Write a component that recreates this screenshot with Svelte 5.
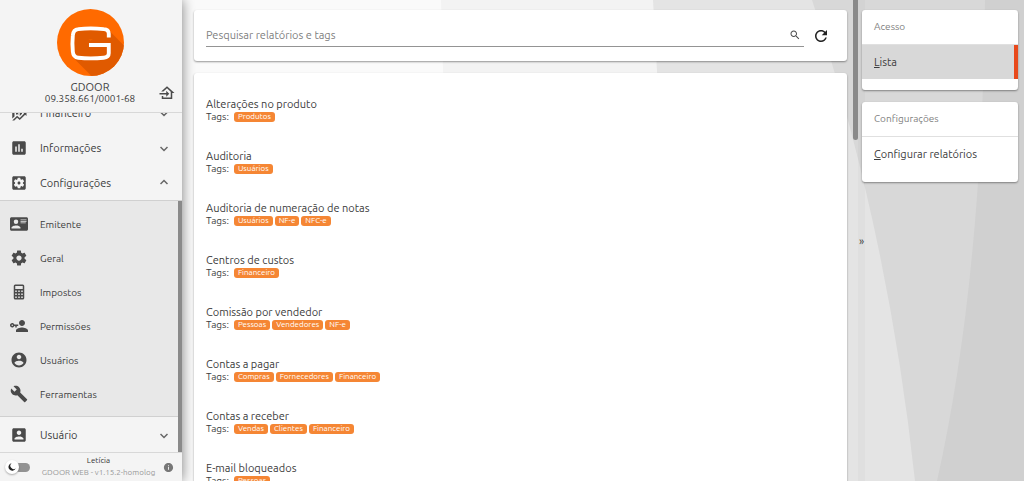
<script>
  const icons = {
    finance: 'M6,16.5L3,19.44V11H6M11,14.66L9.43,13.32L8,14.64V7H11M16,13L13,16V3H16M18.81,12.81L17,11H22V16L20.21,14.21L13,21.36L9.53,18.34L5.75,22H3L9.47,15.66L13,18.64',
    chart: 'M19 3H5c-1.1 0-2 .9-2 2v14c0 1.1.9 2 2 2h14c1.1 0 2-.9 2-2V5c0-1.1-.9-2-2-2zM9 17H7v-7h2v7zm4 0h-2V7h2v10zm4 0h-2v-4h2v4z',
    settingsBox: 'M12 10c-1.1 0-2 .9-2 2s.9 2 2 2 2-.9 2-2-.9-2-2-2zm7-7H5c-1.11 0-2 .9-2 2v14c0 1.1.89 2 2 2h14c1.11 0 2-.9 2-2V5c0-1.1-.89-2-2-2zm-1.75 9c0 .23-.02.46-.05.68l1.48 1.16c.13.11.17.3.08.45l-1.4 2.42c-.09.15-.27.21-.43.15l-1.74-.7c-.36.28-.76.51-1.18.69l-.26 1.85c-.03.17-.18.3-.35.3h-2.8c-.17 0-.32-.13-.35-.29l-.26-1.85c-.43-.18-.82-.41-1.18-.69l-1.74.7c-.16.06-.34 0-.43-.15l-1.4-2.42c-.09-.15-.05-.34.08-.45l1.48-1.16c-.03-.23-.05-.46-.05-.69 0-.23.02-.46.05-.68l-1.48-1.16c-.13-.11-.17-.3-.08-.45l1.4-2.42c.09-.15.27-.21.43-.15l1.74.7c.36-.28.76-.51 1.18-.69l.26-1.85c.03-.17.18-.3.35-.3h2.8c.17 0 .32.13.35.29l.26 1.85c.43.18.82.41 1.18.69l1.74-.7c.16-.06.34 0 .43.15l1.4 2.42c.09.15.05.34-.08.45l-1.48 1.16c.03.23.05.46.05.69z',
    card: 'M2,3H22C23.05,3 24,3.95 24,5V19C24,20.05 23.05,21 22,21H2C0.95,21 0,20.05 0,19V5C0,3.95 0.95,3 2,3M14,6V7H22V6H14M14,8V9H21.5L22,9V8H14M14,10V11H21V10H14M8,13.91C6,13.91 2,15 2,17V18H14V17C14,15 10,13.91 8,13.91M8,6A3,3 0 0,0 5,9A3,3 0 0,0 8,12A3,3 0 0,0 11,9A3,3 0 0,0 8,6Z',
    gear: 'M19.43 12.98c.04-.32.07-.64.07-.98s-.03-.66-.07-.98l2.11-1.65c.19-.15.24-.42.12-.64l-2-3.46c-.12-.22-.39-.3-.61-.22l-2.49 1c-.52-.4-1.08-.73-1.69-.98l-.38-2.65C14.46 2.18 14.25 2 14 2h-4c-.25 0-.46.18-.49.42l-.38 2.65c-.61.25-1.17.59-1.69.98l-2.49-1c-.23-.09-.49 0-.61.22l-2 3.46c-.13.22-.07.49.12.64l2.11 1.65c-.04.32-.07.65-.07.98s.03.66.07.98l-2.11 1.65c-.19.15-.24.42-.12.64l2 3.46c.12.22.39.3.61.22l2.49-1c.52.4 1.08.73 1.69.98l.38 2.65c.03.24.24.42.49.42h4c.25 0 .46-.18.49-.42l.38-2.65c.61-.25 1.17-.59 1.69-.98l2.49 1c.23.09.49 0 .61-.22l2-3.46c.12-.22.07-.49-.12-.64l-2.11-1.65zM12 15.5c-1.93 0-3.5-1.57-3.5-3.5s1.57-3.5 3.5-3.5 3.5 1.57 3.5 3.5-1.57 3.5-3.5 3.5z',
    calculator: 'M7,2H17A2,2 0 0,1 19,4V20A2,2 0 0,1 17,22H7A2,2 0 0,1 5,20V4A2,2 0 0,1 7,2M7,4V8H17V4H7M7,10V12H9V10H7M11,10V12H13V10H11M15,10V12H17V10H15M7,14V16H9V14H7M11,14V16H13V14H11M15,14V16H17V14H15M7,18V20H9V18H7M11,18V20H13V18H11M15,18V20H17V18H15Z',
    key: 'M11 10v2H9v2H7v-2H5.8c-.4 1.2-1.5 2-2.8 2-1.7 0-3-1.3-3-3s1.3-3 3-3c1.3 0 2.4.8 2.8 2H11m-8 0c-.6 0-1 .4-1 1s.4 1 1 1 1-.4 1-1-.4-1-1-1m13 4c2.7 0 8 1.3 8 4v2H8v-2c0-2.7 5.3-4 8-4m0-2c-2.2 0-4-1.8-4-4s1.8-4 4-4 4 1.8 4 4-1.8 4-4 4Z',
    account: 'M12 2C6.48 2 2 6.48 2 12s4.48 10 10 10 10-4.48 10-10S17.52 2 12 2zm0 3c1.66 0 3 1.34 3 3s-1.34 3-3 3-3-1.34-3-3 1.34-3 3-3zm0 14.2c-2.5 0-4.71-1.28-6-3.22.03-1.99 4-3.08 6-3.08 1.99 0 5.97 1.09 6 3.08-1.29 1.94-3.5 3.22-6 3.22z',
    wrench: 'M22.7 19l-9.1-9.1c.9-2.3.4-5-1.5-6.9-2-2-5-2.4-7.4-1.3L9 6 6 9 1.6 4.7C.4 7.1.9 10.1 2.9 12.1c1.9 1.9 4.6 2.4 6.9 1.5l9.1 9.1c.4.4 1 .4 1.4 0l2.3-2.3c.5-.4.5-1.1.1-1.4z',
    accountBox: 'M3 5v14c0 1.1.89 2 2 2h14c1.1 0 2-.9 2-2V5c0-1.1-.9-2-2-2H5c-1.11 0-2 .9-2 2zm12 4c0 1.66-1.34 3-3 3s-3-1.34-3-3 1.34-3 3-3 3 1.34 3 3zm-9 8c0-2 4-3.1 6-3.1s6 1.1 6 3.1v1H6v-1z',
    exit: 'M15 13L11 17V14H2V12H11V9L15 13M5 20V16H7V18H17V10.19L12 5.69L7.21 10H4.22L12 3L22 12H19V20H5Z',
    search: 'M15.5 14h-.79l-.28-.27C15.41 12.59 16 11.11 16 9.5 16 5.91 13.09 3 9.5 3S3 5.91 3 9.5 5.91 16 9.5 16c1.61 0 3.09-.59 4.23-1.57l.27.28v.79l5 4.99L20.49 19l-4.99-5zm-6 0C7.01 14 5 11.99 5 9.5S7.01 5 9.5 5 14 7.01 14 9.5 11.99 14 9.5 14z',
    refresh: 'M17.65 6.35C16.2 4.9 14.21 4 12 4c-4.42 0-7.99 3.58-7.99 8s3.57 8 7.99 8c3.73 0 6.84-2.55 7.73-6h-2.08c-.82 2.33-3.04 4-5.65 4-3.31 0-6-2.69-6-6s2.69-6 6-6c1.66 0 3.14.69 4.22 1.78L13 11h7V4l-2.35 2.35z',
    info: 'M12 2C6.48 2 2 6.48 2 12s4.48 10 10 10 10-4.48 10-10S17.52 2 12 2zm1 15h-2v-6h2v6zm0-8h-2V7h2v2z'
  };

  const menu = [
    { label: 'Financeiro', icon: 'finance' },
    { label: 'Informações', icon: 'chart' },
    {
      label: 'Configurações',
      icon: 'settingsBox',
      children: [
        { label: 'Emitente', icon: 'card' },
        { label: 'Geral', icon: 'gear' },
        { label: 'Impostos', icon: 'calculator' },
        { label: 'Permissões', icon: 'key' },
        { label: 'Usuários', icon: 'account' },
        { label: 'Ferramentas', icon: 'wrench' }
      ]
    },
    { label: 'Usuário', icon: 'accountBox' }
  ];

  const reports = [
    { title: 'Alterações no produto', tags: ['Produtos'] },
    { title: 'Auditoria', tags: ['Usuários'] },
    { title: 'Auditoria de numeração de notas', tags: ['Usuários', 'NF-e', 'NFC-e'] },
    { title: 'Centros de custos', tags: ['Financeiro'] },
    { title: 'Comissão por vendedor', tags: ['Pessoas', 'Vendedores', 'NF-e'] },
    { title: 'Contas a pagar', tags: ['Compras', 'Fornecedores', 'Financeiro'] },
    { title: 'Contas a receber', tags: ['Vendas', 'Clientes', 'Financeiro'] },
    { title: 'E-mail bloqueados', tags: ['Pessoas'] }
  ];

  let open = $state('Configurações');
  let search = $state('');
  let light = $state(false);

  const filtered = $derived(
    reports.filter((r) => (r.title + ' ' + r.tags.join(' ')).toLowerCase().includes(search.toLowerCase()))
  );

  function toggle(label) {
    open = open === label ? '' : label;
  }
</script>

{#snippet icon(name)}
  <svg class="icon" viewBox="0 0 24 24" aria-hidden="true"><path d={icons[name]} fill-rule="evenodd" /></svg>
{/snippet}

<div class="app">
  <svg class="backdrop" viewBox="0 0 1024 481" preserveAspectRatio="none" aria-hidden="true">
    <rect width="1024" height="481" fill="#fafafa" />
    <path d="M441 0H1024V481H455Z" fill="#f3f3f3" />
    <path d="M653 0H1024V481H680Z" fill="#e4e4e4" />
    <path d="M812 0Q888 230 915 481H1024V0Z" fill="#d8d8d8" />
    <path d="M985 0Q982 280 937 481H1024V0Z" fill="#d0d0d0" />
  </svg>

  <div class="sidebar">
    <header class="company">
      <svg class="logo" viewBox="0 0 66 66" role="img" aria-label="GDOOR">
        <clipPath id="disc"><circle cx="33" cy="33" r="33" /></clipPath>
        <g clip-path="url(#disc)">
          <rect width="66" height="66" fill="#ff6a00" />
          <path d="M51 21L80 50L48 80L16 48Q14 34 17 21L33 31Z" fill="#e05a00" />
          <path d="M18 21H48V30H18Z" fill="#e05a00" />
        </g>
        <path
          d="M51 28V24.500Q51 20 46 19.800Q33 18.500 21 19.800Q16 20.200 15.600 26Q14.800 34 15.600 42Q16 47.500 21 48Q33 49.200 46 48Q51 47.500 51 43.500V35.500H31.500"
          fill="none" stroke="#fff" stroke-width="3.800"
        />
      </svg>
      <strong>GDOOR</strong>
      <span>09.358.661/0001-68</span>
      <button class="exit" aria-label="Sair">{@render icon('exit')}</button>
    </header>

    <nav>
      {#each menu as item}
        <button class="item" aria-expanded={open === item.label} onclick={() => toggle(item.label)}>
          {@render icon(item.icon)}
          <span>{item.label}</span>
          <svg class="chevron" class:up={open === item.label} viewBox="0 0 8 8" aria-hidden="true">
            <path d="M.5 3L4 6.500L7.500 3" />
          </svg>
        </button>
        {#if item.children && open === item.label}
          <div class="submenu">
            {#each item.children as child}
              <a class="item" href="#{child.icon}">
                {@render icon(child.icon)}
                <span>{child.label}</span>
              </a>
            {/each}
          </div>
        {/if}
      {/each}
      <div class="nav-thumb"></div>
    </nav>

    <footer>
      <label class="theme">
        <input type="checkbox" bind:checked={light} aria-label="Modo escuro" />
        <span class="knob">
          <svg viewBox="0 0 12 12" aria-hidden="true">
            <path d="M5.500 1.500A4.500 4.500 0 1 0 10.500 7.500A3.600 3.600 0 0 1 5.500 1.500Z" />
          </svg>
        </span>
      </label>
      <div class="version">
        <span class="user">Letícia</span>
        <span>GDOOR WEB - v1.15.2-homolog</span>
      </div>
      <button class="info" aria-label="Sobre">{@render icon('info')}</button>
    </footer>
  </div>

  <main>
    <div class="content">
      <form class="panel search" onsubmit={(e) => e.preventDefault()}>
        <div class="field">
          <input type="text" placeholder="Pesquisar relatórios e tags" aria-label="Pesquisar relatórios e tags" bind:value={search} />
          <button type="submit" class="find" aria-label="Pesquisar">{@render icon('search')}</button>
        </div>
        <button type="button" class="refresh" aria-label="Atualizar" onclick={() => (search = '')}>{@render icon('refresh')}</button>
      </form>

      <ul class="panel reports">
        {#each filtered as report}
          <li>
            <a href="#relatorio">{report.title}</a>
            <div class="tags">
              <span>Tags:</span>
              {#each report.tags as tag}
                <span class="tag">{tag}</span>
              {/each}
            </div>
          </li>
        {/each}
      </ul>
    </div>
    <div class="main-thumb"></div>
  </main>

  <button class="collapse" aria-label="Recolher">»</button>

  <aside>
    <section class="panel">
      <h2>Acesso</h2>
      <a class="active" href="#lista"><span><u>L</u>ista</span></a>
    </section>
    <section class="panel">
      <h2>Configurações</h2>
      <a href="#configurar"><span><u>C</u>onfigurar relatórios</span></a>
    </section>
  </aside>
</div>

<style>
  :global(body) {
    margin: 0;
  }

  .app {
    position: relative;
    display: flex;
    height: 100vh;
    overflow: hidden;
    font-family: Ubuntu, 'Noto Sans', sans-serif;
    font-size: 11px;
    color: #3c3c3c;
  }

  .app :is(button, input) {
    margin: 0;
    padding: 0;
    border: 0;
    background: none;
    font: inherit;
    color: inherit;
  }

  .app button {
    cursor: pointer;
  }

  a {
    color: inherit;
    text-decoration: none;
  }

  .icon {
    display: block;
    flex: none;
    width: 18px;
    height: 18px;
    fill: #4a4a4a;
  }

  .backdrop {
    position: absolute;
    inset: 0;
    width: 100%;
    height: 100%;
  }

  .panel {
    border-radius: 3px;
    background: #fff;
    box-shadow: 0 1px 2px rgba(0, 0, 0, 0.4);
  }

  /* sidebar */
  .sidebar {
    position: relative;
    display: flex;
    flex: none;
    flex-direction: column;
    width: 182px;
    background: #f4f4f4;
    box-shadow: 0 0 12px rgba(0, 0, 0, 0.5);
  }

  .company {
    position: relative;
    display: flex;
    flex: none;
    flex-direction: column;
    align-items: center;
    box-sizing: border-box;
    height: 113px;
    padding: 9px 2px 0 0;
    border-bottom: 1px solid #d8d8d8;
    font-size: 10px;
    line-height: 12px;
  }

  .logo {
    width: 67px;
    height: 67px;
    margin-bottom: 5px;
  }

  .company strong {
    font-size: 11px;
    font-weight: 400;
  }

  .company .exit {
    position: absolute;
    right: 6px;
    bottom: 10px;
  }

  nav {
    position: relative;
    display: flex;
    flex: 1;
    flex-direction: column;
    justify-content: flex-end;
    min-height: 0;
    overflow: hidden;
  }

  .item {
    display: flex;
    flex: none;
    align-items: center;
    gap: 12px;
    box-sizing: border-box;
    height: 34px;
    padding: 0 14px 0 10px;
  }

  .app button.item {
    height: 35px;
    padding: 0 14px 0 10px;
    text-align: left;
  }

  .item span {
    flex: 1;
  }

  .chevron {
    width: 8px;
    height: 8px;
    fill: none;
    stroke: #666;
    stroke-width: 1.5;
  }

  .chevron.up {
    transform: rotate(180deg);
  }

  .submenu {
    flex: none;
    padding: 6px 0 5px;
    border-top: 1px solid #d0d0d0;
    border-bottom: 1px solid #d0d0d0;
    background: #e8e8e8;
    font-size: 10px;
  }

  .nav-thumb {
    position: absolute;
    top: 88px;
    right: 0;
    bottom: 0;
    width: 4px;
    background: #8a8a8a;
  }

  footer {
    display: flex;
    flex: none;
    align-items: center;
    justify-content: space-between;
    box-sizing: border-box;
    height: 29px;
    padding: 0 8px 0 5px;
    border-top: 1px solid #d8d8d8;
    font-size: 8px;
    line-height: 12px;
  }

  .theme {
    display: flex;
    align-items: center;
    width: 29px;
    height: 14px;
    cursor: pointer;
  }

  .app .theme input {
    appearance: none;
    width: 15px;
    height: 9px;
    margin-left: 10px;
    border-radius: 5px;
    background: #929292;
  }

  .knob {
    display: grid;
    flex: none;
    place-items: center;
    width: 14px;
    height: 14px;
    margin-left: -25px;
    border-radius: 50%;
    background: #fff;
    box-shadow: 0 1px 2px rgba(0, 0, 0, 0.3);
  }

  .theme input:checked + .knob {
    margin-left: -14px;
  }

  .knob svg {
    width: 10px;
    height: 10px;
    fill: #222;
  }

  .version {
    display: flex;
    flex-direction: column;
    align-items: center;
    color: #9a9a9a;
  }

  .user {
    color: #333;
  }

  .info .icon {
    width: 11px;
    height: 11px;
    fill: #777;
  }

  /* report list */
  main {
    position: relative;
    display: flex;
    flex: 1;
    gap: 6px;
    min-width: 0;
  }

  .content {
    display: flex;
    flex: 1;
    flex-direction: column;
    gap: 12px;
    min-width: 0;
    padding: 10px 0 0 12px;
  }

  .main-thumb {
    width: 5px;
    height: 140px;
    border-radius: 0 0 3px 3px;
    background: #8a8a8a;
  }

  .search {
    display: flex;
    align-items: center;
    gap: 8px;
    padding: 14px 17px 14px 12px;
  }

  .field {
    display: flex;
    flex: 1;
    align-items: center;
    height: 22px;
    border-bottom: 1px solid #949494;
  }

  .app .field input {
    flex: 1;
    min-width: 0;
    outline: 0;
  }

  .field input::placeholder {
    color: #808080;
    opacity: 1;
  }

  .find .icon {
    width: 12px;
    height: 12px;
    margin-right: 3px;
  }

  .refresh .icon {
    fill: #222;
  }

  .reports {
    flex: none;
    margin: 0;
    padding: 24px 12px;
    list-style: none;
  }

  .reports li {
    height: 52px;
  }

  .reports li > a {
    display: block;
    line-height: 15px;
  }

  .tags {
    display: flex;
    align-items: center;
    gap: 2px;
    height: 10px;
    font-size: 10px;
    line-height: 10px;
  }

  .tags > :first-child {
    margin-right: 3px;
  }

  .tag {
    padding: 0 4px;
    border-radius: 3px;
    background: #f58634;
    font-size: 8px;
    color: #fff;
  }

  /* actions */
  .app .collapse {
    position: relative;
    width: 7px;
    margin-right: -3px;
    background: rgba(0, 0, 0, 0.02);
    text-align: center;
  }

  aside {
    position: relative;
    display: flex;
    flex: none;
    flex-direction: column;
    gap: 12px;
    width: 156px;
    padding: 10px 6px 0 0;
  }

  aside .panel {
    padding-bottom: 11px;
  }

  h2 {
    margin: 0;
    padding: 0 12px;
    border-bottom: 1px solid #e0e0e0;
    font-size: 10px;
    font-weight: 400;
    line-height: 34px;
    color: #808080;
  }

  aside a {
    display: block;
    padding: 0 12px;
    line-height: 34px;
  }

  aside a.active {
    border-right: 4px solid #e8491b;
    background: #d8d8d8;
  }
</style>
